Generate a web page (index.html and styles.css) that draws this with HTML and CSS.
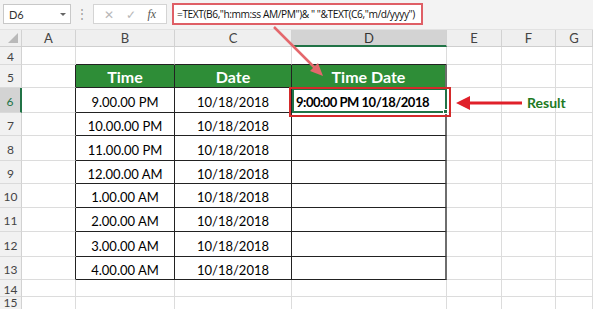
FILE: index.html
```html
<!DOCTYPE html>
<html>
<head>
<meta charset="utf-8">
<link rel="stylesheet" href="styles.css">
</head>
<body>
<div class="app">
  <div class="toolbar">
    <div class="namebox"><span>D6</span><span class="dd"></span></div>
    <div class="sep">⋮</div>
    <div class="fxbox"><span class="ico">✕</span><span class="ico">✓</span><span class="fx"><i>f</i>x</span></div>
    <div class="formula">=TEXT(B6,"h:mm:ss AM/PM")&amp; " "&amp;TEXT(C6,"m/d/yyyy")</div>
  </div>
  <div class="grid">
    <div class="ch corner"><span class="tri"></span></div>
    <div class="ch">A</div><div class="ch">B</div><div class="ch">C</div><div class="ch sel">D</div><div class="ch">E</div><div class="ch">F</div><div class="ch">G</div>

    <div class="rh">4</div><div class="c"></div><div class="c tt"></div><div class="c tt"></div><div class="c tt"></div><div class="c"></div><div class="c"></div><div class="c"></div>

    <div class="rh">5</div><div class="c tl"></div><div class="c t hd">Time</div><div class="c t hd">Date</div><div class="c t hd dr">Time Date</div><div class="c"></div><div class="c"></div><div class="c"></div>

    <div class="rh rsel">6</div><div class="c tl"></div><div class="c t">9.00.00 PM</div><div class="c t">10/18/2018</div><div class="c t dr res"><span class="cur">9:00:00 PM 10/18/2018</span><span class="handle"></span></div><div class="c"></div><div class="c"></div><div class="c"></div>

    <div class="rh">7</div><div class="c tl"></div><div class="c t">10.00.00 PM</div><div class="c t">10/18/2018</div><div class="c t dr"></div><div class="c"></div><div class="c"></div><div class="c"></div>

    <div class="rh">8</div><div class="c tl"></div><div class="c t">11.00.00 PM</div><div class="c t">10/18/2018</div><div class="c t dr"></div><div class="c"></div><div class="c"></div><div class="c"></div>

    <div class="rh">9</div><div class="c tl"></div><div class="c t">12.00.00 AM</div><div class="c t">10/18/2018</div><div class="c t dr"></div><div class="c"></div><div class="c"></div><div class="c"></div>

    <div class="rh">10</div><div class="c tl"></div><div class="c t">1.00.00 AM</div><div class="c t">10/18/2018</div><div class="c t dr"></div><div class="c"></div><div class="c"></div><div class="c"></div>

    <div class="rh">11</div><div class="c tl"></div><div class="c t">2.00.00 AM</div><div class="c t">10/18/2018</div><div class="c t dr"></div><div class="c"></div><div class="c"></div><div class="c"></div>

    <div class="rh">12</div><div class="c tl"></div><div class="c t">3.00.00 AM</div><div class="c t">10/18/2018</div><div class="c t dr"></div><div class="c"></div><div class="c"></div><div class="c"></div>

    <div class="rh">13</div><div class="c tl"></div><div class="c t">4.00.00 AM</div><div class="c t">10/18/2018</div><div class="c t dr"></div><div class="c"></div><div class="c"></div><div class="c"></div>

    <div class="rh">14</div><div class="c"></div><div class="c"></div><div class="c"></div><div class="c"></div><div class="c"></div><div class="c"></div><div class="c"></div>

    <div class="rh last">15</div><div class="c"></div><div class="c"></div><div class="c"></div><div class="c"></div><div class="c"></div><div class="c"></div><div class="c"></div>
  </div>

  <svg class="overlay" width="593" height="309" viewBox="0 0 593 309">
    <line x1="274" y1="27" x2="316" y2="69" stroke="#e4676c" stroke-width="2.5"/>
    <polygon points="323,76 310,71 318,63" fill="#e4676c"/>
    <rect x="290" y="88" width="160" height="28" fill="none" stroke="#d42a2a" stroke-width="2"/>
    <line x1="522" y1="103" x2="466" y2="103" stroke="#e0202a" stroke-width="3"/>
    <polygon points="456,103 470,96 470,110" fill="#e0202a"/>
  </svg>
  <div class="result">Result</div>
</div>
</body>
</html>
```

FILE: styles.css
```css
* { box-sizing: border-box; margin: 0; padding: 0; }
html, body { width: 593px; height: 309px; overflow: hidden; background: #fff; }
body { font-family: Lato, "Open Sans", sans-serif; color: #000; }

.app { position: relative; width: 593px; height: 309px; overflow: hidden; }

.toolbar {
  height: 30px;
  background: #f3f3f3;
  display: flex;
  align-items: flex-start;
  padding: 4px 0 0 3px;
  border-bottom: 1px solid #e2e2e2;
}
.namebox {
  width: 68px; height: 20px;
  background: #fff;
  border: 1px solid #c8c8c8;
  display: flex; align-items: center; justify-content: space-between;
  padding: 0 4px 0 5px;
  font-size: 11px; color: #333;
}
.dd {
  width: 0; height: 0;
  border-left: 3px solid transparent; border-right: 3px solid transparent;
  border-top: 3px solid #666;
}
.sep { width: 22px; text-align: center; color: #9a9a9a; font-size: 12px; line-height: 20px; }
.fxbox {
  width: 74px; height: 20px;
  background: #fff;
  border: 1px solid #d4d4d4;
  display: flex; align-items: center; justify-content: space-around;
  padding: 0 4px;
  color: #b8b8b8; font-size: 12px;
}
.fxbox .fx { color: #555; font-family: "Liberation Serif", serif; font-size: 12px; font-style: italic; }
.fxbox .fx i { font-style: italic; }
.formula {
  margin-left: 5px;
  margin-top: -1px;
  width: 251px; height: 22px;
  background: #fff;
  border: 2px solid #df5f66;
  font-family: "Open Sans", sans-serif;
  font-size: 10.2px;
  line-height: 18px;
  padding-left: 3px;
  color: #111;
  white-space: nowrap;
  letter-spacing: -0.42px;
}

.grid {
  display: grid;
  grid-template-columns: 22px 54px 99px 117px 155px 55px 54px 37px;
  grid-template-rows: 17px 18px 23px 25px 23px 25px 23px 24px 24px 25px 23px 17px 18px;
}
.ch {
  background: #efefef;
  border-right: 1px solid #d2d2d2;
  border-bottom: 1px solid #cfcfcf;
  font-size: 13px; color: #444;
  display: flex; align-items: center; justify-content: center;
}
.corner { position: relative; }
.tri {
  position: absolute; right: 3px; bottom: 3px;
  width: 0; height: 0;
  border-left: 10px solid transparent;
  border-bottom: 10px solid #b9b9b9;
}
.ch.sel { background: #d3d3d3; border-bottom: 2px solid #217346; color: #333; }
.rh {
  background: #f1f1f1;
  border-right: 1px solid #d2d2d2;
  border-bottom: 1px solid #dadada;
  font-size: 12px; color: #444;
  display: flex; align-items: center; justify-content: center;
  padding-top: 2px;
}
.rh.last { align-items: flex-start; padding-top: 0; line-height: 12px; }
.rh.rsel { background: #d3d3d3; color: #217346; border-right: 2px solid #217346; }
.c {
  border-right: 1px solid #dcdcdc;
  border-bottom: 1px solid #dcdcdc;
  font-size: 13px;
  display: flex; align-items: center; justify-content: center;
  padding-top: 3px;
  white-space: nowrap;
}
.c.t { border-right: 1px solid #222; border-bottom: 1px solid #222; }
.c.tl { border-right: 1px solid #222; }
.c.tt { border-bottom: 1px solid #222; }
.c.dr { border-right: 2px solid #6e6e6e; }
.c.hd {
  background: #2e8d37;
  color: #fff; font-weight: 700; font-size: 16px;
  padding-top: 1px;
}
.c.res {
  position: relative;
  justify-content: flex-start;
  padding-left: 2px;
  border: 2px solid #217346;
  font-weight: 700;
  font-size: 13px;
  letter-spacing: -0.5px;
}
.handle {
  position: absolute; right: -3px; bottom: -3px;
  width: 5px; height: 5px;
  background: #217346; border: 1px solid #fff;
}
.overlay { position: absolute; left: 0; top: 0; pointer-events: none; }
.result {
  position: absolute; left: 527px; top: 94px;
  font-family: Lato, sans-serif; font-weight: 700; font-size: 14px;
  color: #1e7a24;
}
```
